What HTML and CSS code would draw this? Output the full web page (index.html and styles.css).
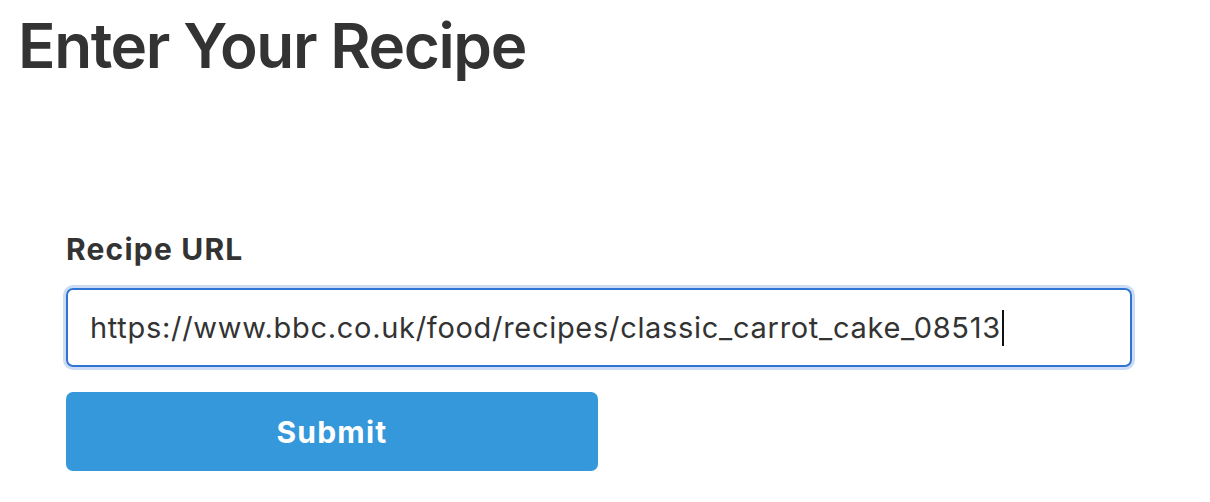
FILE: index.html
```html
<!DOCTYPE html>
<html>
<head>
<meta charset="utf-8">
<link rel="stylesheet" href="styles.css">
</head>
<body>
<h1 class="title">Enter Your Recipe</h1>
<form class="recipe-form">
  <label class="field-label" for="url">Recipe URL</label>
  <div class="input-box"><span class="input-text">https://www.bbc.co.uk/food/recipes/classic_carrot_cake_08513</span><span class="caret"></span></div>
  <button class="submit" type="button">Submit</button>
</form>
</body>
</html>
```
FILE: styles.css
```css
* { box-sizing: border-box; }
html, body { margin: 0; padding: 0; background: #fff; }
body {
  font-family: Inter, "Noto Sans", sans-serif;
  color: #333;
  padding: 0 18px;
}
.title {
  margin: 0;
  padding-top: 10px;
  font-size: 62px;
  font-weight: 600;
  line-height: 72px;
  letter-spacing: -1.4px;
}
.recipe-form {
  display: flex;
  flex-direction: column;
  align-items: flex-start;
  margin: 149px 0 0 48px;
}
.field-label {
  font-size: 30px;
  font-weight: 700;
  line-height: 36px;
  letter-spacing: 1.2px;
  margin-bottom: 21px;
}
.input-box {
  width: 1066px;
  height: 79px;
  border: 2px solid #2f74d0;
  border-radius: 7px;
  box-shadow: 0 0 0 3px #cbdcf4;
  display: flex;
  align-items: center;
  padding: 0 22px;
  font-size: 29px;
  letter-spacing: 0.7px;
  color: #333;
}
.caret {
  display: inline-block;
  width: 2px;
  height: 36px;
  background: #111;
  margin-left: 1px;
}
.submit {
  margin-top: 25px;
  width: 532px;
  height: 79px;
  border: none;
  border-radius: 7px;
  background: #3498db;
  color: #fff;
  font-family: Inter, "Noto Sans", sans-serif;
  font-size: 30px;
  font-weight: 700;
  letter-spacing: 1.2px;
}
```
